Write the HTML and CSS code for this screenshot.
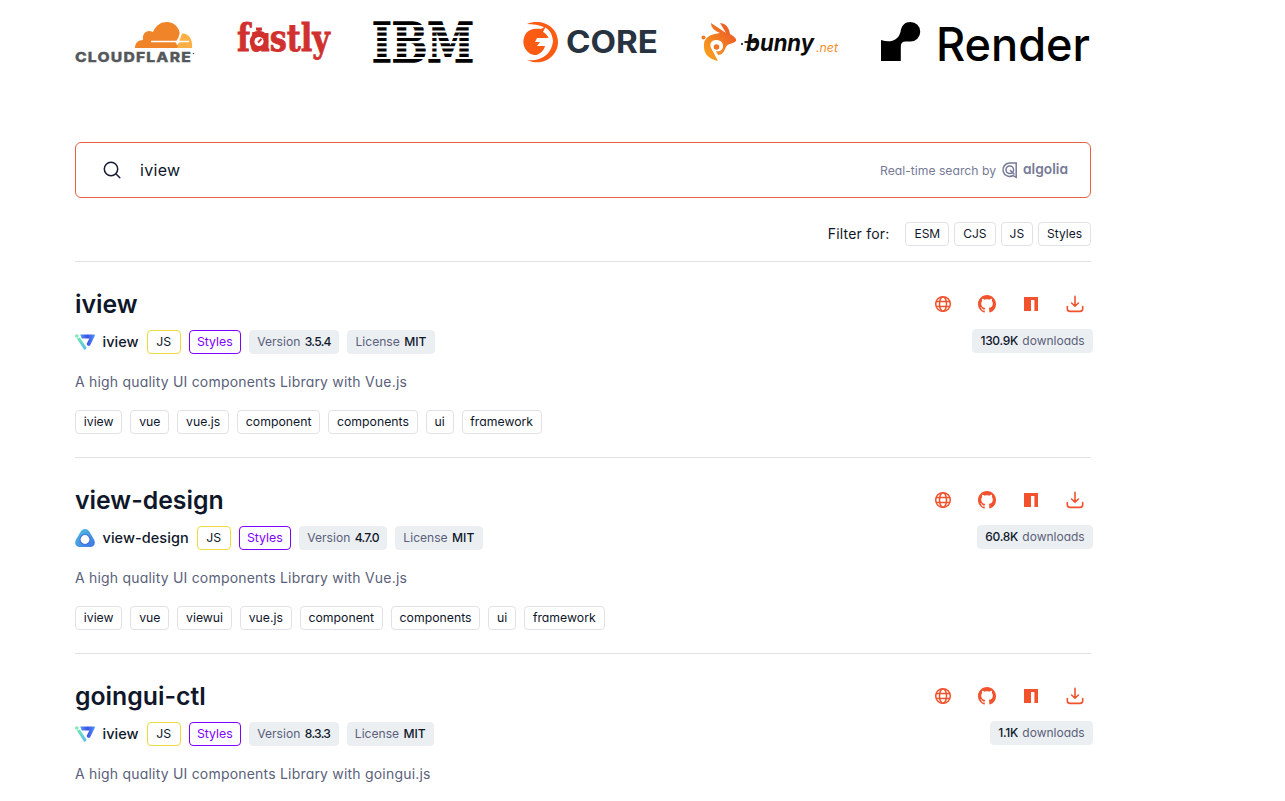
FILE: index.html
```html
<!DOCTYPE html>
<html lang="en">
<head>
    <meta charset="UTF-8">
    <meta name="viewport" content="width=device-width, initial-scale=1.0">
    <title>iview - package search</title>
    <link rel="stylesheet" href="styles.css">
</head>
<body>
    <!-- Shared icons -->
    <svg class="sprite" width="0" height="0">
        <defs>
            <linearGradient id="iview-a" x1="0" y1="0" x2="1" y2="0">
                <stop offset="0" stop-color="#4f9df0"/>
                <stop offset=".5" stop-color="#3f50e8"/>
                <stop offset="1" stop-color="#4b96f8"/>
            </linearGradient>
            <linearGradient id="iview-b" x1="0" y1="0" x2="0" y2="1">
                <stop offset="0" stop-color="#72e6b4"/>
                <stop offset="1" stop-color="#58bdeb"/>
            </linearGradient>
            <linearGradient id="view-a" x1="0" y1="0" x2="1" y2="1">
                <stop offset="0" stop-color="#4fc3dc"/>
                <stop offset="1" stop-color="#3d74e8"/>
            </linearGradient>
        </defs>
        <symbol id="icon-globe" viewBox="0 0 18 18">
            <g fill="none" stroke="currentColor" stroke-width="1.5">
                <circle cx="9" cy="9" r="7.3"/>
                <ellipse cx="9" cy="9" rx="3.5" ry="7.3"/>
                <path d="M2 6.600h14M2 11.400h14"/>
            </g>
        </symbol>
        <symbol id="icon-github" viewBox="0 0 16 16">
            <path fill="currentColor" d="M8 0C3.58 0 0 3.58 0 8c0 3.54 2.29 6.53 5.47 7.59.4.07.55-.17.55-.38 0-.19-.01-.82-.01-1.49-2.01.37-2.53-.49-2.69-.94-.09-.23-.48-.94-.82-1.13-.28-.15-.68-.52-.01-.53.63-.01 1.08.58 1.23.82.72 1.21 1.87.87 2.33.66.07-.52.28-.87.51-1.07-1.78-.2-3.64-.89-3.64-3.95 0-.87.31-1.59.82-2.15-.08-.2-.36-1.02.08-2.12 0 0 .67-.21 2.2.82.64-.18 1.32-.27 2-.27s1.36.09 2 .27c1.53-1.04 2.2-.82 2.2-.82.44 1.1.16 1.92.08 2.12.51.56.82 1.27.82 2.15 0 3.07-1.87 3.75-3.65 3.95.29.25.54.73.54 1.48 0 1.07-.01 1.93-.01 2.2 0 .21.15.46.55.38A8.01 8.01 0 0 0 16 8c0-4.42-3.58-8-8-8z"/>
        </symbol>
        <symbol id="icon-npm" viewBox="0 0 18 18">
            <path fill="currentColor" d="M2 2h14v14h-3.600V5H9v11H2z"/>
        </symbol>
        <symbol id="icon-download" viewBox="0 0 18 18">
            <path fill="none" stroke="currentColor" stroke-width="1.6" stroke-linecap="round" stroke-linejoin="round" d="M9 1.400v9.800M5.600 8L9 11.300 12.400 8M1.300 11.600v2.200q0 2.600 2.600 2.600h10.200q2.600 0 2.600-2.600v-2.200"/>
        </symbol>
        <symbol id="logo-iview" viewBox="0 0 20 16">
            <path fill="url(#iview-a)" d="M5.200.4h13.600q1.500 0 .9 1.500l-4.400 9q-1.200 1.600-3 .3L11.600 10l2.700-5.600H6.800z"/>
            <path fill="url(#iview-b)" d="M1.800 4.600l3-1.200 6.800 10.400q-1 2.400-2.600 1.700z"/>
            <circle cx="1.800" cy="2" r="1.800" fill="#78ecb2"/>
        </symbol>
        <symbol id="logo-view" viewBox="0 0 20 18">
            <path fill="url(#view-a)" d="M10 0c2 0 3.200 1 4.400 2.800l4.400 7.400c2.400 4.200.4 7.800-3.800 7.800H5c-4.200 0-6.200-3.600-3.800-7.800l4.400-7.400C6.800 1 8 0 10 0z"/>
            <circle cx="10" cy="10.500" r="5.600" fill="#4371df"/>
            <circle cx="10" cy="10.500" r="4.400" fill="#fff"/>
        </symbol>
    </svg>

    <div class="container">
        <div class="sponsors">
            <svg class="sponsor" width="120" height="44" viewBox="0 0 120 44">
                <path fill="#ef8528" d="M60 28c0-5 3-8 8-8-1-7 4-11 10-8C81 5 86 2 92 2c7 0 12 5 13 12l-2 14z"/>
                <path fill="#fbb045" d="M102 28l5-14.500c6-.5 11 5 10 14.500z"/>
                <path fill="none" stroke="#fff" stroke-width="1.300" d="M76 21.500h26M105.500 13l-2.500 8M104 21.500h10"/>
                <path fill="#fff" d="M103 18l1 3 4 .6-4 1-2 3-1-3-3-1 4-1z"/>
                <text class="cloudflare-text" x="0" y="42" textLength="117" lengthAdjust="spacingAndGlyphs">CLOUDFLARE</text>
                <circle cx="118.500" cy="33.500" r=".8" fill="#55585b"/>
            </svg>
            <svg class="sponsor" width="94" height="44" viewBox="0 0 94 44">
                <text class="fastly-text" x="0" y="31" textLength="93" lengthAdjust="spacingAndGlyphs">fastly</text>
                <path fill="#d0312f" d="M19 7.500h6v3h-1.500v3h-3v-3H19zM28 13h3.500v18H28z"/>
                <circle cx="22" cy="21.500" r="9.300" fill="#d0312f"/>
                <circle cx="22" cy="21.500" r="4.600" fill="#fff"/>
                <path stroke="#d0312f" stroke-width="1.800" d="M21 22.500l3.500-3.500"/>
            </svg>
            <svg class="sponsor" width="102" height="44" viewBox="0 0 102 44">
                <text class="ibm-text" x="-1" y="42" textLength="102" lengthAdjust="spacingAndGlyphs">IBM</text>
                <path stroke="#fff" stroke-width="2.200" d="M-2 6.200h105M-2 11.500h105M-2 16.800h105M-2 22.100h105M-2 27.400h105M-2 32.700h105M-2 38h105"/>
            </svg>
            <svg class="sponsor" width="142" height="44" viewBox="0 0 142 44">
                <path fill="#fc5b14" d="M10 4C25-2 41 7 41 22S25 47 10 40C25 42 35 33 36 21 35 13 32 9 27 7c-5-2-11-3-17-3z"/>
                <path fill="#fc5b14" d="M29 6l-3 6c6 3 8 10 5 16-4 7-13 9-19 5-6-5-7-12-4-18C11 9 18 8 24 9z"/>
                <path fill="#fff" d="M20 18h15v3c0 8-5 15-12 17l-7-2c6-1 11-5 12-10h-8l3-4h-5z"/>
                <text class="gcore-text" x="49" y="33" textLength="92" lengthAdjust="spacingAndGlyphs">CORE</text>
            </svg>
            <svg class="sponsor" width="138" height="44" viewBox="0 0 138 44">
                <defs>
                    <linearGradient id="bunny" x1="0" y1="1" x2="1" y2="0">
                        <stop offset="0" stop-color="#fbaa19"/>
                        <stop offset="1" stop-color="#ea4d2c"/>
                    </linearGradient>
                </defs>
                <path fill="url(#bunny)" d="M10 3l15 10-6-10c7 1 9 5 10 11 3 2 7 4 6 7-3 3-8 2-10 6-2 5-4 8-8 8l-2-4c4 1 7-1 7-5s-3-6-7-6-7 3-5 8l7 13C7 39 2 33 3 24c0-5 5-9 11-10l5-1c-5-2-9-5-9-10z"/>
                <circle cx="15.500" cy="27" r="2.800" fill="#ef7426"/>
                <circle cx="2.500" cy="17.500" r="2" fill="#ed7929"/>
                <path stroke="#0b0b0b" stroke-width="1.800" d="M43.500 22h12"/>
                <circle cx="41" cy="24" r="1"/>
                <text class="bunny-text" x="45" y="31" textLength="68" lengthAdjust="spacingAndGlyphs">bunny</text>
                <text class="bunny-net" x="115" y="32" textLength="22" lengthAdjust="spacingAndGlyphs">.net</text>
            </svg>
            <svg class="sponsor" width="210" height="44" viewBox="0 0 210 44">
                <path d="M29.500 2a9.700 9.700 0 0 1 0 19.500h-5q-4.700 0-4.700 4.700V41H0V20c9 3 17 1 19.500-8C20.500 5 24 2 29.500 2z"/>
                <text class="render-text" x="55" y="41" textLength="154" lengthAdjust="spacingAndGlyphs">Render</text>
            </svg>
        </div>

        <div class="search">
            <svg class="search-icon" width="18" height="18" viewBox="0 0 18 18">
                <circle cx="8" cy="8" r="6.700"/>
                <path d="M12.800 12.800l4 4"/>
            </svg>
            <span class="search-text">iview</span>
            <span class="search-by">Real-time search by</span>
            <svg class="algolia" width="68" height="20" viewBox="0 0 68 20">
                <g fill="none" stroke="#777a96" stroke-width="1.500">
                    <path d="M15.200 3H8.500a6.700 6.700 0 1 0 3.500 12.500l3.200 1.800z"/>
                    <circle cx="8.800" cy="9.800" r="3.800"/>
                    <path d="M9 10l4.500 4.500"/>
                </g>
                <text x="22" y="14" textLength="45" lengthAdjust="spacingAndGlyphs">algolia</text>
            </svg>
        </div>

        <div class="filters">
            <span class="filter-label">Filter for:</span>
            <span class="tag">ESM</span>
            <span class="tag">CJS</span>
            <span class="tag">JS</span>
            <span class="tag">Styles</span>
        </div>

        <div class="package">
            <div class="package-head">
                <h2>iview</h2>
                <div class="links">
                    <svg><use href="#icon-globe"/></svg>
                    <svg><use href="#icon-github"/></svg>
                    <svg><use href="#icon-npm"/></svg>
                    <svg><use href="#icon-download"/></svg>
                </div>
            </div>
            <div class="meta">
                <svg class="logo" width="20" height="18"><use href="#logo-iview"/></svg>
                <strong class="owner">iview</strong>
                <span class="tag js">JS</span>
                <span class="tag styles">Styles</span>
                <span class="badge version">Version <b>3.5.4</b></span>
                <span class="badge">License <b>MIT</b></span>
                <span class="badge downloads"><b>130.9K</b> downloads</span>
            </div>
            <p>A high quality UI components Library with Vue.js</p>
            <div class="keywords">
                <span class="tag">iview</span>
                <span class="tag">vue</span>
                <span class="tag">vue.js</span>
                <span class="tag">component</span>
                <span class="tag">components</span>
                <span class="tag">ui</span>
                <span class="tag">framework</span>
            </div>
        </div>

        <div class="package">
            <div class="package-head">
                <h2>view-design</h2>
                <div class="links">
                    <svg><use href="#icon-globe"/></svg>
                    <svg><use href="#icon-github"/></svg>
                    <svg><use href="#icon-npm"/></svg>
                    <svg><use href="#icon-download"/></svg>
                </div>
            </div>
            <div class="meta">
                <svg class="logo" width="20" height="20"><use href="#logo-view"/></svg>
                <strong class="owner">view-design</strong>
                <span class="tag js">JS</span>
                <span class="tag styles">Styles</span>
                <span class="badge version">Version <b>4.7.0</b></span>
                <span class="badge">License <b>MIT</b></span>
                <span class="badge downloads"><b>60.8K</b> downloads</span>
            </div>
            <p>A high quality UI components Library with Vue.js</p>
            <div class="keywords">
                <span class="tag">iview</span>
                <span class="tag">vue</span>
                <span class="tag">viewui</span>
                <span class="tag">vue.js</span>
                <span class="tag">component</span>
                <span class="tag">components</span>
                <span class="tag">ui</span>
                <span class="tag">framework</span>
            </div>
        </div>

        <div class="package">
            <div class="package-head">
                <h2>goingui-ctl</h2>
                <div class="links">
                    <svg><use href="#icon-globe"/></svg>
                    <svg><use href="#icon-github"/></svg>
                    <svg><use href="#icon-npm"/></svg>
                    <svg><use href="#icon-download"/></svg>
                </div>
            </div>
            <div class="meta">
                <svg class="logo" width="20" height="18"><use href="#logo-iview"/></svg>
                <strong class="owner">iview</strong>
                <span class="tag js">JS</span>
                <span class="tag styles">Styles</span>
                <span class="badge version">Version <b>8.3.3</b></span>
                <span class="badge">License <b>MIT</b></span>
                <span class="badge downloads"><b>1.1K</b> downloads</span>
            </div>
            <p>A high quality UI components Library with goingui.js</p>
        </div>
    </div>
</body>
</html>
```
FILE: styles.css
```css
body {
    margin: 0;
    background: #fff;
    color: #0f172a;
    font-family: Inter, "Open Sans", sans-serif;
    font-feature-settings: "cv11";
}
.sprite {
    position: absolute;
}
.container {
    width: 1016px;
    margin-left: 75px;
    padding-top: 20px;
}
.sponsors {
    display: flex;
    justify-content: space-between;
    height: 44px;
}
.sponsor {
    display: block;
    overflow: visible;
}
.cloudflare-text {
    font: 800 13.5px Inter, sans-serif;
    letter-spacing: 1px;
    fill: #55585b;
    stroke: #55585b;
    stroke-width: 0.3px;
}
.fastly-text {
    font: bold 38px "DejaVu Serif", serif;
    fill: #d0312f;
    stroke: #d0312f;
    stroke-width: 0.8px;
}
.ibm-text {
    font: bold 54px "DejaVu Serif", serif;
    stroke: #000;
    stroke-width: 1.6px;
}
.gcore-text {
    font: bold 31px Inter, sans-serif;
    fill: #273340;
}
.bunny-text {
    font: italic 700 23px Inter, sans-serif;
    fill: #0b0b0b;
}
.bunny-net {
    font: italic 12px Inter, sans-serif;
    fill: #f38b2c;
}
.render-text {
    font: 500 46px Inter, sans-serif;
}
.search {
    display: flex;
    align-items: center;
    box-sizing: border-box;
    height: 56px;
    margin-top: 78px;
    padding: 0 21px 0 27px;
    border: 1px solid #e8613f;
    border-radius: 6px;
}
.search-icon {
    fill: none;
    stroke: #161a33;
    stroke-width: 1.5;
    stroke-linecap: round;
}
.search-text {
    margin-left: 19px;
    font-size: 16px;
    letter-spacing: 0.3px;
}
.search-by {
    margin-left: auto;
    margin-right: 5px;
    color: #777a96;
    font-size: 12.2px;
}
.algolia text {
    font: 600 14px Inter, sans-serif;
    font-feature-settings: "cv11";
    fill: #777a96;
}
.filters {
    display: flex;
    justify-content: flex-end;
    align-items: center;
    gap: 5px;
    padding: 24px 0 15px;
    border-bottom: 1px solid #e1e2e6;
}
.filter-label {
    margin-right: 11px;
    font-size: 14px;
    line-height: 20px;
    letter-spacing: 0.2px;
}
.filters .tag {
    font-size: 12px;
}
.tag, .badge {
    box-sizing: border-box;
    height: 24px;
    padding: 0 8px;
    border: 1px solid #e1e2e9;
    border-radius: 4px;
    font-size: 12.3px;
    line-height: 22px;
    white-space: nowrap;
}
.meta .js {
    padding: 0 8.5px;
    border-color: #f1dc3f;
}
.meta .styles {
    padding: 0 7.3px;
    border-color: #8000ff;
    color: #8000ff;
}
.badge {
    padding: 0 7.3px;
    border-color: #ebeff2;
    background: #ebeff2;
    color: #5b5f7b;
    font-size: 12.1px;
}
.badge b {
    margin-left: 1px;
    color: #0f172a;
    font-weight: 500;
}
.version b {
    letter-spacing: -0.7px;
}
.downloads {
    position: relative;
    top: -1px;
    margin-left: auto;
    margin-right: -2px;
    font-size: 12px;
}
.downloads b {
    margin: 0 1px 0 0;
    letter-spacing: -0.3px;
}
.package {
    box-sizing: border-box;
    height: 196px;
    padding-top: 27px;
    border-bottom: 1px solid #e1e2e6;
}
.package:last-child {
    height: auto;
    border-bottom: 0;
}
.package:last-child p {
    margin-bottom: 0;
}
.package-head {
    display: flex;
    justify-content: space-between;
    align-items: center;
    height: 30px;
}
h2 {
    margin: 0;
    font-size: 24.8px;
    font-weight: 600;
    line-height: 30px;
}
.links {
    display: flex;
    gap: 26px;
    margin-right: 7px;
    color: #f0532d;
}
.links svg {
    width: 18px;
    height: 18px;
}
.meta {
    display: flex;
    align-items: center;
    gap: 8px;
    margin-top: 11px;
}
.owner {
    margin-left: -0.5px;
    font-size: 14.5px;
    font-weight: 500;
    line-height: 20px;
    letter-spacing: 0.05px;
}
p {
    margin: 18px 0;
    color: #5b5f7b;
    font-size: 14px;
    line-height: 20px;
    letter-spacing: 0.2px;
}
.keywords {
    display: flex;
    gap: 8px;
}
.keywords .tag {
    padding: 0 7.8px;
    font-size: 12.25px;
}
```
